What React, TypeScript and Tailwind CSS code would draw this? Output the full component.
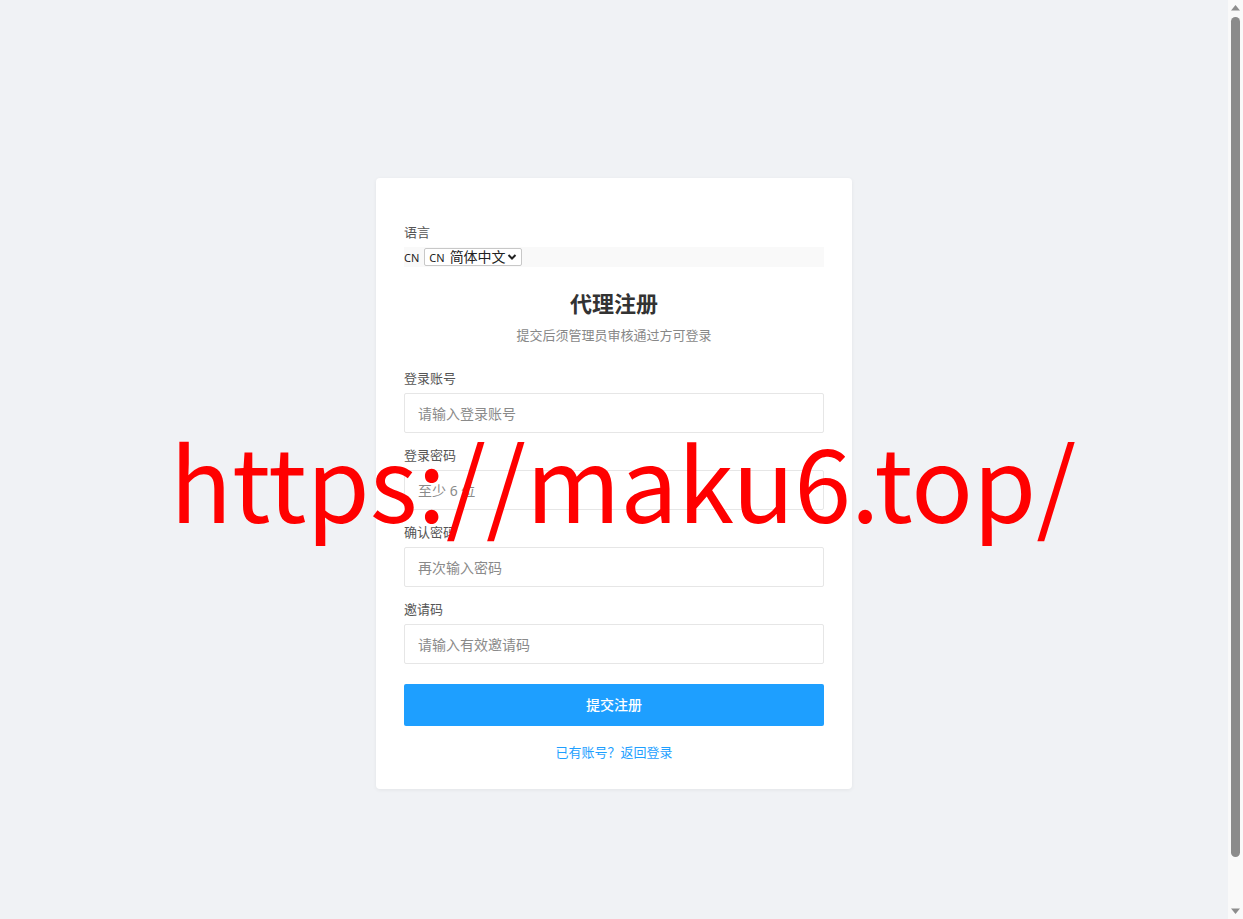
import React from 'react';

const fields = [
  { label: '登录账号', placeholder: '请输入登录账号', type: 'text' },
  { label: '登录密码', placeholder: '至少 6 位', type: 'password' },
  { label: '确认密码', placeholder: '再次输入密码', type: 'password' },
  { label: '邀请码', placeholder: '请输入有效邀请码', type: 'text' },
];

// page scrollbar as it shows in the shot
const ScrollBar = () => (
  <div className="sticky top-0 flex h-screen w-[15px] shrink-0 flex-col items-center bg-[#f9f9f9]">
    <svg className="mt-[5px] shrink-0" width="9" height="6" viewBox="0 0 9 6">
      <path d="M4.5 0L9 5.5H0z" fill="#8d8d8d" />
    </svg>
    <div className="mt-[6px] h-[840px] w-[9px] rounded-full bg-[#8b8b8b]" />
    <svg className="mb-[5px] mt-auto shrink-0" width="9" height="6" viewBox="0 0 9 6">
      <path d="M0 0.5h9L4.5 6z" fill="#8d8d8d" />
    </svg>
  </div>
);

const App = () => {
  return (
    <div className="relative flex items-start bg-[#f0f2f5] font-['Noto_Sans','Noto_Sans_CJK_SC',sans-serif]">
      <div className="flex-1 p-6">
        <div className="flex min-h-screen items-center justify-center">
          <div className="w-[476px] rounded bg-white px-7 pb-[27px] pt-11 shadow-[0_1px_4px_rgba(0,0,0,0.06)]">
            <p className="mb-[5px] text-[13px] leading-5 text-[#555]">语言</p>
            <div className="flex h-5 items-center gap-[5px] bg-[#f9f9f9]">
              <span className="text-[11px] leading-none text-[#222]">CN</span>
              <button
                type="button"
                className="flex h-[18px] w-[98px] items-center rounded-[2px] border border-[#c8c8c8] bg-white pl-[4px] pr-[4px] text-[#222]"
              >
                <span className="text-[11px] leading-none">CN</span>
                <span className="ml-[5px] text-[14px] leading-none">简体中文</span>
                <svg className="ml-auto" width="10" height="8" viewBox="0 0 10 8">
                  <path d="M1.5 2l3.5 3.5L8.5 2" fill="none" stroke="#222" strokeWidth="2" />
                </svg>
              </button>
            </div>

            <h2 className="mt-[22px] text-center text-[22px] font-bold leading-7 text-[#333]">
              代理注册
            </h2>
            <p className="mt-2 text-center text-[13px] leading-5 text-[#888]">
              提交后须管理员审核通过方可登录
            </p>

            <form className="mt-[23px]" onSubmit={(e) => e.preventDefault()}>
              {fields.map((f) => (
                <div key={f.label} className="mb-3">
                  <label className="mb-[5px] block text-[13px] leading-5 text-[#555]">
                    {f.label}
                  </label>
                  <input
                    type={f.type}
                    placeholder={f.placeholder}
                    className="block h-10 w-full rounded-[2px] border border-[#e6e6e6] bg-white px-[13px] text-sm text-[#333] outline-none placeholder:text-[#8a8a8a]"
                  />
                </div>
              ))}
              <button
                type="submit"
                className="mt-2 h-[42px] w-full rounded-[2px] bg-[#1e9fff] text-sm font-medium text-white"
              >
                提交注册
              </button>
            </form>

            <p className="mt-4 text-center text-[13px] leading-5">
              <a href="#" className="text-[#1e9fff]">
                已有账号？返回登录
              </a>
            </p>
          </div>
        </div>
      </div>

      <ScrollBar />

      <div className="pointer-events-none absolute left-[170px] top-[428px] whitespace-nowrap font-['Noto_Sans_CJK_SC',sans-serif] text-[102px] leading-none text-[#ff0000]">
        https://maku6.top/
      </div>
    </div>
  );
};

export default App;
